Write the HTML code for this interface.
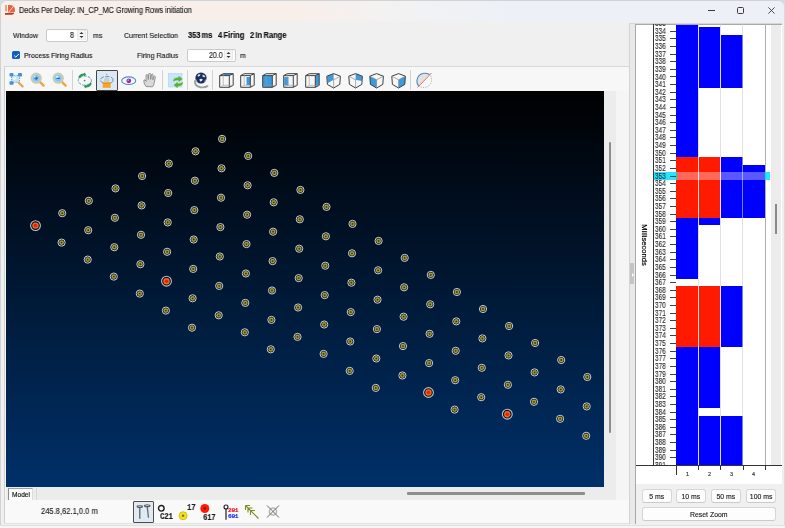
<!DOCTYPE html>
<html><head><meta charset="utf-8"><style>
*{margin:0;padding:0;box-sizing:border-box}
html,body{width:785px;height:528px;overflow:hidden;background:#d3dde6;font-family:"Liberation Sans",sans-serif;color:#1a1a1a}
.a{position:absolute}
.t{position:absolute;white-space:nowrap;font-size:7.1px;line-height:9px;will-change:transform;-webkit-text-stroke:0.15px currentColor}
.lab{position:absolute;left:655px;font-size:8.2px;line-height:9px;color:#262626;transform:scaleX(0.8);transform-origin:0 0;letter-spacing:-0.1px;will-change:transform;-webkit-text-stroke:0.12px #262626}
.tick{position:absolute;left:669.6px;width:6.2px;height:1px;background:#404040}
.btn{position:absolute;background:#fdfdfd;border:1px solid #d6d6d6;border-bottom-color:#cacaca;border-radius:3px;font-size:8px;line-height:14px;text-align:center;color:#1a1a1a;will-change:transform}
.btn span{display:inline-block;transform:scaleX(0.86);-webkit-text-stroke:0.15px currentColor}
</style></head><body>
<!-- window frame -->
<div class="a" style="left:0;top:0;width:785px;height:528px;background:#f0f0f0;border:1px solid #cfd3d8;border-bottom-color:#e4e4e4;border-right-color:#dadada;border-radius:7px 7px 0 0"></div>
<!-- title bar -->
<div class="a" style="left:1px;top:1px;width:783px;height:19.5px;border-radius:6px 6px 0 0;background:linear-gradient(90deg,#f8efeb 0%,#f8efeb 38%,#f2f2f3 52%,#edf1f7 64%,#edf1f7 100%)"></div>
<svg class="a" style="left:5px;top:5px" width="11" height="11" viewBox="0 0 11 11"><rect x="0" y="0" width="2" height="6.4" fill="#eba492"/><path d="M3 0H5Q10 0.2 10 5.2Q10 7.5 8.3 7.5H3Z" fill="#e8643e"/><path d="M3.6 7.2L8.6 1.2" stroke="#fbe3da" stroke-width="0.9"/><path d="M0 8H9.2Q8.8 9.8 6.8 9.8H0Z" fill="#a8402e"/></svg>
<div class="t" style="left:18.5px;top:6px;font-size:8.2px;color:#1b1b1b;transform:scaleX(0.887);transform-origin:0 0">Decks Per Delay: IN_CP_MC Growing Rows initiation</div>
<!-- window controls -->
<div class="a" style="left:708px;top:10px;width:7px;height:1px;background:#3a3a3a"></div>
<div class="a" style="left:737.3px;top:7.3px;width:7px;height:6.5px;border:1px solid #3a3a3a;border-radius:1.5px"></div>
<svg class="a" style="left:767.5px;top:7px" width="7" height="7" viewBox="0 0 7 7"><path d="M0.4 0.4L6.6 6.6M6.6 0.4L0.4 6.6" stroke="#3a3a3a" stroke-width="0.9"/></svg>

<!-- controls -->
<div class="t" style="left:13px;top:31px;font-size:8px;transform:scaleX(0.875);transform-origin:0 0;color:#1c1c1c">Window</div>
<div class="a" style="left:46px;top:28.5px;width:42px;height:13px;background:#fff;border:1px solid #c9c9c9;border-radius:2px"></div>
<div class="t" style="left:70.3px;top:31px;font-size:8.4px;transform:scaleX(0.85);transform-origin:0 0">8</div>
<svg class="a" style="left:77px;top:30px" width="9" height="10" viewBox="0 0 9 10"><rect x="0.5" y="0" width="8" height="10" fill="#f4f4f4" stroke="#dcdcdc" stroke-width="0.5"/><path d="M2.5 4L4.5 2L6.5 4Z M2.5 6L4.5 8L6.5 6Z" fill="#333"/></svg>
<div class="t" style="left:92.7px;top:31px;font-size:8px;transform:scaleX(0.875);transform-origin:0 0;color:#1c1c1c">ms</div>
<div class="t" style="left:123.8px;top:31px;font-size:8px;transform:scaleX(0.875);transform-origin:0 0;color:#1c1c1c">Current Selection</div>
<div class="t" style="left:188.3px;top:31.2px;font-size:8.2px;font-weight:bold;color:#111;transform:scaleX(0.915);transform-origin:0 0;word-spacing:-1.2px">353 ms</div><div class="t" style="left:217.8px;top:31.2px;font-size:8.2px;font-weight:bold;color:#111;transform:scaleX(0.915);transform-origin:0 0;word-spacing:-0.8px">4 Firing</div><div class="t" style="left:249.6px;top:31.2px;font-size:8.2px;font-weight:bold;color:#111;transform:scaleX(0.915);transform-origin:0 0;word-spacing:-0.8px">2 In Range</div>

<div class="a" style="left:11.5px;top:50.5px;width:8.5px;height:8.5px;background:#1160c0;border-radius:1.5px"></div>
<svg class="a" style="left:11.5px;top:50.5px" width="9" height="9" viewBox="0 0 9 9"><path d="M2.2 4.6L3.8 6.2L6.9 2.9" stroke="#fff" stroke-width="1" fill="none"/></svg>
<div class="t" style="left:23.9px;top:50.8px;font-size:8px;transform:scaleX(0.875);transform-origin:0 0;color:#141414">Process Firing Radius</div>
<div class="t" style="left:137.1px;top:50.8px;font-size:8px;transform:scaleX(0.875);transform-origin:0 0;color:#1c1c1c">Firing Radius</div>
<div class="a" style="left:187px;top:48.5px;width:48.5px;height:13px;background:#fff;border:1px solid #c9c9c9;border-radius:2px"></div>
<div class="t" style="left:208.5px;top:50.8px;font-size:8.2px;transform:scaleX(0.85);transform-origin:0 0">20.0</div>
<svg class="a" style="left:224px;top:50px" width="9" height="10" viewBox="0 0 9 10"><rect x="0.5" y="0" width="8" height="10" fill="#f4f4f4" stroke="#dcdcdc" stroke-width="0.5"/><path d="M2.5 4L4.5 2L6.5 4Z M2.5 6L4.5 8L6.5 6Z" fill="#333"/></svg>
<div class="t" style="left:240px;top:50.8px;font-size:8px;transform:scaleX(0.875);transform-origin:0 0;color:#1c1c1c">m</div>

<!-- left panel -->
<div class="a" style="left:3.5px;top:66px;width:625px;height:458px;background:#f5f5f5;border-top:1px solid #d8d8d8;border-left:1px solid #d0d0d0"></div>
<!-- toolbar -->
<div class="a" style="left:4.5px;top:67px;width:623.5px;height:24px;background:#f7f7f7"></div><div class="a" style="left:71.6px;top:70px;width:1px;height:20px;background:#d2d2d2"></div><div class="a" style="left:162.0px;top:70px;width:1px;height:20px;background:#d2d2d2"></div><div class="a" style="left:186.9px;top:70px;width:1px;height:20px;background:#d2d2d2"></div><div class="a" style="left:212.1px;top:70px;width:1px;height:20px;background:#d2d2d2"></div><div class="a" style="left:410.1px;top:70px;width:1px;height:20px;background:#d2d2d2"></div><div class="a" style="left:95.8px;top:70px;width:21.8px;height:20.8px;background:#dce8f4;border:1px solid #454545;border-radius:1px"></div><svg class="a" style="left:8px;top:72px" width="17" height="17" viewBox="0 0 17 17"><path d="M3.5 3.5H11.5V10.5H3.5Z" fill="none" stroke="#6aa8de" stroke-width="1" stroke-dasharray="1.5 1"/><circle cx="7.5" cy="7" r="3.6" fill="#bfe3fa"/><circle cx="6.8" cy="6.3" r="1.6" fill="#e6f5fe"/><rect x="1.5" y="1" width="4" height="3.6" rx="0.8" fill="#4a8fd6"/><rect x="10" y="1" width="4" height="3.6" rx="0.8" fill="#4a8fd6"/><rect x="1.5" y="9.2" width="4" height="3.6" rx="0.8" fill="#4a8fd6"/><path d="M10.5 10.5L14.6 14.4" stroke="#e5a64c" stroke-width="2.2" stroke-linecap="round"/></svg><svg class="a" style="left:30.4px;top:72px" width="16" height="16" viewBox="0 0 16 16"><path d="M9.2 9.2L13.6 13.6" stroke="#e8a748" stroke-width="2.4" stroke-linecap="round"/><circle cx="6.2" cy="6.2" r="4.9" fill="#a8d6f4" stroke="#d4c7a6" stroke-width="1.5"/><circle cx="6.2" cy="6.2" r="3.3" fill="#86c4f0"/><circle cx="5.2" cy="5.0" r="1.3" fill="#d6eefc"/><path d="M4.4 6.2h3.6M6.2 4.4v3.6" stroke="#2b6fb8" stroke-width="1.2"/></svg><svg class="a" style="left:52.0px;top:72px" width="16" height="16" viewBox="0 0 16 16"><path d="M9.2 9.2L13.6 13.6" stroke="#e8a748" stroke-width="2.4" stroke-linecap="round"/><circle cx="6.2" cy="6.2" r="4.9" fill="#a8d6f4" stroke="#d4c7a6" stroke-width="1.5"/><circle cx="6.2" cy="6.2" r="3.3" fill="#86c4f0"/><circle cx="5.2" cy="5.0" r="1.3" fill="#d6eefc"/><path d="M4.4 6.4h3.6" stroke="#2b6fb8" stroke-width="1.2"/></svg><svg class="a" style="left:77px;top:72px" width="17" height="17" viewBox="0 0 17 17"><ellipse cx="7.8" cy="8.6" rx="6.6" ry="4.6" fill="none" stroke="#5b95c5" stroke-width="1" stroke-dasharray="3 1.2"/><path d="M1.2 5.5Q2.5 1.5 7 1.5L7.2 0.4L9.2 2.6L7 4.6L7 3.5Q4 3.6 3 6.2Z" fill="#2c9a55"/><path d="M14.8 11.5Q13.5 15.5 9 15.5L8.8 16.6L6.8 14.4L9 12.4L9 13.5Q12 13.4 13 10.8Z" fill="#2c9a55"/><circle cx="7.6" cy="8.6" r="0.9" fill="#3aa060"/></svg><svg class="a" style="left:99px;top:72px" width="16" height="17" viewBox="0 0 16 17"><path d="M4.8 10.6Q4.6 5.5 7.7 4.6Q10.8 5.5 10.6 10.6Z" fill="#cdcdcd"/><ellipse cx="7.8" cy="8" rx="6.4" ry="3.6" fill="none" stroke="#4a8cc4" stroke-width="0.9" stroke-dasharray="4 1.5"/><circle cx="7.7" cy="2.4" r="0.7" fill="#999"/><rect x="3.7" y="10.6" width="8" height="5.2" fill="#f5a623"/><rect x="3.7" y="10.6" width="8" height="1.2" fill="#e58e10"/></svg><svg class="a" style="left:120.5px;top:74px" width="16" height="14" viewBox="0 0 16 14"><ellipse cx="7.7" cy="6.7" rx="7" ry="3.8" fill="none" stroke="#4b8ec9" stroke-width="1.1"/><circle cx="7.8" cy="6.8" r="2.4" fill="#8e2bb0"/><circle cx="7.2" cy="6.2" r="0.9" fill="#d57fe8"/></svg><svg class="a" style="left:143px;top:73px" width="14" height="15" viewBox="0 0 14 15"><path d="M3 13.5Q1 11 0.8 8Q0.8 6.6 2 6.9L3.2 8.4L3 2.6Q3 1.6 4 1.6Q4.8 1.6 5 2.6L5.3 6.5L5.6 1.2Q5.8 0.3 6.7 0.4Q7.6 0.5 7.6 1.4L7.7 6.4L8.4 1.8Q8.6 1 9.4 1.1Q10.2 1.3 10.1 2.2L9.8 6.8L10.8 3.6Q11.1 2.9 11.8 3.1Q12.5 3.4 12.3 4.2L11.4 9Q11 12 9.6 13.8Z" fill="#d9d9d9" stroke="#8a8a8a" stroke-width="0.9"/></svg><svg class="a" style="left:167.5px;top:72.5px" width="16" height="16" viewBox="0 0 16 16"><rect x="0.5" y="0.5" width="13.5" height="13.5" fill="#c6e3f8" stroke="#aed3f0" stroke-width="0.6"/><path d="M2 2.5h11M2 5h11M2 7.5h11M2 10h11M2 12.5h11" stroke="#eaf5fd" stroke-width="0.6" stroke-dasharray="0.8 1.6"/><path d="M5 8.6Q5.4 4.2 10.6 4.4L10.6 2.8L14.6 5.9L10.6 9L10.6 7.3Q7.5 7.2 5 8.6Z" fill="#5bb232"/><path d="M15.2 9Q14.8 13.4 9.6 13.4L9.6 15.2L5.6 12L9.6 8.9L9.6 10.6Q12.7 10.6 15.2 9Z" fill="#5bb232"/></svg><svg class="a" style="left:192.5px;top:71.5px" width="16" height="18" viewBox="0 0 16 18"><path d="M2 9Q1.6 14 7.5 15.2Q11.5 15.8 14.5 14.2" stroke="#a0a0a0" stroke-width="1.9" fill="none" stroke-linecap="round"/><circle cx="8" cy="6" r="5.6" fill="#1b2d5c"/><path d="M4.5 3.2Q6 1.6 7.6 2.4Q7 4.4 5 4.8Z" fill="#dfe8f4"/><path d="M9.6 2.6Q11.8 3 12.4 5Q10.8 5.6 9.4 4.4Z" fill="#c9d8ec"/><path d="M6.4 7.2Q8.4 6.2 9.8 7.6Q9 9.8 7 9.6Z" fill="#e3ecf6"/><path d="M3 7Q3.6 8.8 4.6 9.4L3.6 9.8Q2.6 8.6 2.6 7.2Z" fill="#9fb4d4"/><path d="M11.8 8.2Q12.6 7.4 13.2 7.2Q12.8 9.6 11.2 10.4Z" fill="#9fb4d4"/></svg><svg class="a" style="left:218.5px;top:73px" width="15" height="15" viewBox="0 0 15 15"><path d="M0.7 2.6L4.2 0.7H14.2L10.3 2.6Z" fill="#3a9be0"/><path d="M0.7 2.6H10.3V14.3H0.7Z M4.2 0.7H14.2V12.3 M10.3 2.6L14.2 0.7 M10.3 14.3L14.2 12.3 M0.7 2.6L4.2 0.7" fill="none" stroke="#404040" stroke-width="1"/><path d="M4.2 0.7V12.3H14.2 M0.7 14.3L4.2 12.3" fill="none" stroke="#9a9a9a" stroke-width="0.6"/></svg><svg class="a" style="left:240px;top:73px" width="15" height="15" viewBox="0 0 15 15"><path d="M6.5 4H10.3V12H6.5Z" fill="#3a9be0"/><path d="M0.7 2.6H10.3V14.3H0.7Z M4.2 0.7H14.2V12.3 M10.3 2.6L14.2 0.7 M10.3 14.3L14.2 12.3 M0.7 2.6L4.2 0.7" fill="none" stroke="#404040" stroke-width="1"/><path d="M4.2 0.7V12.3H14.2 M0.7 14.3L4.2 12.3" fill="none" stroke="#9a9a9a" stroke-width="0.6"/></svg><svg class="a" style="left:261.8px;top:73px" width="15" height="15" viewBox="0 0 15 15"><path d="M0.7 2.6H10.3V14.3H0.7Z" fill="#3a9be0"/><path d="M0.7 2.6H10.3V14.3H0.7Z M4.2 0.7H14.2V12.3 M10.3 2.6L14.2 0.7 M10.3 14.3L14.2 12.3 M0.7 2.6L4.2 0.7" fill="none" stroke="#404040" stroke-width="1"/><path d="M4.2 0.7V12.3H14.2 M0.7 14.3L4.2 12.3" fill="none" stroke="#9a9a9a" stroke-width="0.6"/></svg><svg class="a" style="left:283.3px;top:73px" width="15" height="15" viewBox="0 0 15 15"><path d="M1.3 4H5.5V12.5H1.3Z" fill="#3a9be0"/><path d="M0.7 2.6H10.3V14.3H0.7Z M4.2 0.7H14.2V12.3 M10.3 2.6L14.2 0.7 M10.3 14.3L14.2 12.3 M0.7 2.6L4.2 0.7" fill="none" stroke="#404040" stroke-width="1"/><path d="M4.2 0.7V12.3H14.2 M0.7 14.3L4.2 12.3" fill="none" stroke="#9a9a9a" stroke-width="0.6"/></svg><svg class="a" style="left:304.8px;top:73px" width="15" height="15" viewBox="0 0 15 15"><path d="M10.3 2.6L14.2 0.7V12.3L10.3 14.3Z" fill="#3a9be0"/><path d="M0.7 2.6H10.3V14.3H0.7Z M4.2 0.7H14.2V12.3 M10.3 2.6L14.2 0.7 M10.3 14.3L14.2 12.3 M0.7 2.6L4.2 0.7" fill="none" stroke="#404040" stroke-width="1"/><path d="M4.2 0.7V12.3H14.2 M0.7 14.3L4.2 12.3" fill="none" stroke="#9a9a9a" stroke-width="0.6"/></svg><svg class="a" style="left:326.3px;top:72.8px" width="15" height="16" viewBox="0 0 15 16"><path d="M0.8 3.2L7.6 0.6L7.6 6.8L2 10Z" fill="#3a9be0"/><path d="M0.8 3.2L7.6 0.6L14.4 3.2L13.8 11.4L7.6 15L1.4 11.4Z" fill="none" stroke="#404040" stroke-width="1"/><path d="M0.8 3.2L7.6 6.8L14.4 3.2 M7.6 6.8V15" fill="none" stroke="#8a8a8a" stroke-width="0.7"/></svg><svg class="a" style="left:347.8px;top:72.8px" width="15" height="16" viewBox="0 0 15 16"><path d="M7.6 0.6L14.4 3.2L13.6 8L7.6 6.8Z" fill="#3a9be0"/><path d="M0.8 3.2L7.6 0.6L14.4 3.2L13.8 11.4L7.6 15L1.4 11.4Z" fill="none" stroke="#404040" stroke-width="1"/><path d="M0.8 3.2L7.6 6.8L14.4 3.2 M7.6 6.8V15" fill="none" stroke="#8a8a8a" stroke-width="0.7"/></svg><svg class="a" style="left:369.4px;top:72.8px" width="15" height="16" viewBox="0 0 15 16"><path d="M0.8 3.2L7.6 6.8V15L1.4 11.4Z" fill="#3a9be0"/><path d="M0.8 3.2L7.6 0.6L14.4 3.2L13.8 11.4L7.6 15L1.4 11.4Z" fill="none" stroke="#404040" stroke-width="1"/><path d="M0.8 3.2L7.6 6.8L14.4 3.2 M7.6 6.8V15" fill="none" stroke="#8a8a8a" stroke-width="0.7"/></svg><svg class="a" style="left:390.9px;top:72.8px" width="15" height="16" viewBox="0 0 15 16"><path d="M14.4 3.2L7.6 6.8V15L13.8 11.4Z" fill="#3a9be0"/><path d="M0.8 3.2L7.6 0.6L14.4 3.2L13.8 11.4L7.6 15L1.4 11.4Z" fill="none" stroke="#404040" stroke-width="1"/><path d="M0.8 3.2L7.6 6.8L14.4 3.2 M7.6 6.8V15" fill="none" stroke="#8a8a8a" stroke-width="0.7"/></svg><svg class="a" style="left:415.5px;top:71.5px" width="17" height="17" viewBox="0 0 17 17"><path d="M2.5 14Q0.5 11 1 8Q2 2 8 1.2Q11 1 13.5 2.5Z" fill="#e2e2e2"/><path d="M2.5 14Q0.5 11 1 8Q2 2 8 1.2Q11 1 13.5 2.5" fill="none" stroke="#4f86c0" stroke-width="1.1"/><path d="M13.5 2.5Q16 5 15.5 9Q14.5 15 8 15.5Q5 15.5 2.5 14" fill="none" stroke="#9a9a9a" stroke-width="0.9" stroke-dasharray="1 1.2"/><path d="M1.5 15.5L15.5 1" stroke="#e07060" stroke-width="1"/></svg>
<!-- view -->
<div class="a" style="left:6px;top:91px;width:598px;height:396px;background:linear-gradient(180deg,#000000 0%,#003069 100%)"></div>
<svg class="a" style="left:6px;top:91px" width="598" height="396" viewBox="0 0 598 396"><circle cx="29.5" cy="134.6" r="4.9" fill="#0a0f18" stroke="#b9c3cc" stroke-width="1.1"/><circle cx="29.5" cy="134.6" r="3.2" fill="#f26a1e"/><circle cx="29.5" cy="134.6" r="1.8" fill="#e8200c"/><circle cx="56.2" cy="122.2" r="3.6" fill="#15170f" stroke="#c9cfcf" stroke-width="1"/><circle cx="56.2" cy="122.2" r="2.4" fill="#9d9b44"/><circle cx="56.2" cy="122.2" r="0.9" fill="#34341e"/><circle cx="55.6" cy="151.6" r="3.6" fill="#15170f" stroke="#c9cfcf" stroke-width="1"/><circle cx="55.6" cy="151.6" r="2.4" fill="#9d9b44"/><circle cx="55.6" cy="151.6" r="0.9" fill="#34341e"/><circle cx="82.8" cy="109.8" r="3.6" fill="#15170f" stroke="#c9cfcf" stroke-width="1"/><circle cx="82.8" cy="109.8" r="2.4" fill="#9d9b44"/><circle cx="82.8" cy="109.8" r="0.9" fill="#34341e"/><circle cx="82.2" cy="139.2" r="3.6" fill="#15170f" stroke="#c9cfcf" stroke-width="1"/><circle cx="82.2" cy="139.2" r="2.4" fill="#9d9b44"/><circle cx="82.2" cy="139.2" r="0.9" fill="#34341e"/><circle cx="81.7" cy="168.6" r="3.6" fill="#15170f" stroke="#c9cfcf" stroke-width="1"/><circle cx="81.7" cy="168.6" r="2.4" fill="#9d9b44"/><circle cx="81.7" cy="168.6" r="0.9" fill="#34341e"/><circle cx="109.5" cy="97.4" r="3.6" fill="#15170f" stroke="#c9cfcf" stroke-width="1"/><circle cx="109.5" cy="97.4" r="2.4" fill="#9d9b44"/><circle cx="109.5" cy="97.4" r="0.9" fill="#34341e"/><circle cx="108.9" cy="126.8" r="3.6" fill="#15170f" stroke="#c9cfcf" stroke-width="1"/><circle cx="108.9" cy="126.8" r="2.4" fill="#9d9b44"/><circle cx="108.9" cy="126.8" r="0.9" fill="#34341e"/><circle cx="108.3" cy="156.2" r="3.6" fill="#15170f" stroke="#c9cfcf" stroke-width="1"/><circle cx="108.3" cy="156.2" r="2.4" fill="#9d9b44"/><circle cx="108.3" cy="156.2" r="0.9" fill="#34341e"/><circle cx="107.8" cy="185.6" r="3.6" fill="#15170f" stroke="#c9cfcf" stroke-width="1"/><circle cx="107.8" cy="185.6" r="2.4" fill="#9d9b44"/><circle cx="107.8" cy="185.6" r="0.9" fill="#34341e"/><circle cx="136.1" cy="85.0" r="3.6" fill="#15170f" stroke="#c9cfcf" stroke-width="1"/><circle cx="136.1" cy="85.0" r="2.4" fill="#9d9b44"/><circle cx="136.1" cy="85.0" r="0.9" fill="#34341e"/><circle cx="135.6" cy="114.4" r="3.6" fill="#15170f" stroke="#c9cfcf" stroke-width="1"/><circle cx="135.6" cy="114.4" r="2.4" fill="#9d9b44"/><circle cx="135.6" cy="114.4" r="0.9" fill="#34341e"/><circle cx="135.0" cy="143.8" r="3.6" fill="#15170f" stroke="#c9cfcf" stroke-width="1"/><circle cx="135.0" cy="143.8" r="2.4" fill="#9d9b44"/><circle cx="135.0" cy="143.8" r="0.9" fill="#34341e"/><circle cx="134.4" cy="173.2" r="3.6" fill="#15170f" stroke="#c9cfcf" stroke-width="1"/><circle cx="134.4" cy="173.2" r="2.4" fill="#9d9b44"/><circle cx="134.4" cy="173.2" r="0.9" fill="#34341e"/><circle cx="133.8" cy="202.6" r="3.6" fill="#15170f" stroke="#c9cfcf" stroke-width="1"/><circle cx="133.8" cy="202.6" r="2.4" fill="#9d9b44"/><circle cx="133.8" cy="202.6" r="0.9" fill="#34341e"/><circle cx="162.8" cy="72.6" r="3.6" fill="#15170f" stroke="#c9cfcf" stroke-width="1"/><circle cx="162.8" cy="72.6" r="2.4" fill="#9d9b44"/><circle cx="162.8" cy="72.6" r="0.9" fill="#34341e"/><circle cx="162.2" cy="102.0" r="3.6" fill="#15170f" stroke="#c9cfcf" stroke-width="1"/><circle cx="162.2" cy="102.0" r="2.4" fill="#9d9b44"/><circle cx="162.2" cy="102.0" r="0.9" fill="#34341e"/><circle cx="161.7" cy="131.4" r="3.6" fill="#15170f" stroke="#c9cfcf" stroke-width="1"/><circle cx="161.7" cy="131.4" r="2.4" fill="#9d9b44"/><circle cx="161.7" cy="131.4" r="0.9" fill="#34341e"/><circle cx="161.1" cy="160.8" r="3.6" fill="#15170f" stroke="#c9cfcf" stroke-width="1"/><circle cx="161.1" cy="160.8" r="2.4" fill="#9d9b44"/><circle cx="161.1" cy="160.8" r="0.9" fill="#34341e"/><circle cx="160.5" cy="190.2" r="4.9" fill="#0a0f18" stroke="#b9c3cc" stroke-width="1.1"/><circle cx="160.5" cy="190.2" r="3.2" fill="#f26a1e"/><circle cx="160.5" cy="190.2" r="1.8" fill="#e8200c"/><circle cx="159.9" cy="219.6" r="3.6" fill="#15170f" stroke="#c9cfcf" stroke-width="1"/><circle cx="159.9" cy="219.6" r="2.4" fill="#9d9b44"/><circle cx="159.9" cy="219.6" r="0.9" fill="#34341e"/><circle cx="189.5" cy="60.3" r="3.6" fill="#15170f" stroke="#c9cfcf" stroke-width="1"/><circle cx="189.5" cy="60.3" r="2.4" fill="#9d9b44"/><circle cx="189.5" cy="60.3" r="0.9" fill="#34341e"/><circle cx="188.9" cy="89.7" r="3.6" fill="#15170f" stroke="#c9cfcf" stroke-width="1"/><circle cx="188.9" cy="89.7" r="2.4" fill="#9d9b44"/><circle cx="188.9" cy="89.7" r="0.9" fill="#34341e"/><circle cx="188.3" cy="119.1" r="3.6" fill="#15170f" stroke="#c9cfcf" stroke-width="1"/><circle cx="188.3" cy="119.1" r="2.4" fill="#9d9b44"/><circle cx="188.3" cy="119.1" r="0.9" fill="#34341e"/><circle cx="187.7" cy="148.5" r="3.6" fill="#15170f" stroke="#c9cfcf" stroke-width="1"/><circle cx="187.7" cy="148.5" r="2.4" fill="#9d9b44"/><circle cx="187.7" cy="148.5" r="0.9" fill="#34341e"/><circle cx="187.2" cy="177.9" r="3.6" fill="#15170f" stroke="#c9cfcf" stroke-width="1"/><circle cx="187.2" cy="177.9" r="2.4" fill="#9d9b44"/><circle cx="187.2" cy="177.9" r="0.9" fill="#34341e"/><circle cx="186.6" cy="207.3" r="3.6" fill="#15170f" stroke="#c9cfcf" stroke-width="1"/><circle cx="186.6" cy="207.3" r="2.4" fill="#9d9b44"/><circle cx="186.6" cy="207.3" r="0.9" fill="#34341e"/><circle cx="186.0" cy="236.7" r="3.6" fill="#15170f" stroke="#c9cfcf" stroke-width="1"/><circle cx="186.0" cy="236.7" r="2.4" fill="#9d9b44"/><circle cx="186.0" cy="236.7" r="0.9" fill="#34341e"/><circle cx="216.1" cy="47.9" r="3.6" fill="#15170f" stroke="#c9cfcf" stroke-width="1"/><circle cx="216.1" cy="47.9" r="2.4" fill="#9d9b44"/><circle cx="216.1" cy="47.9" r="0.9" fill="#34341e"/><circle cx="215.5" cy="77.3" r="3.6" fill="#15170f" stroke="#c9cfcf" stroke-width="1"/><circle cx="215.5" cy="77.3" r="2.4" fill="#9d9b44"/><circle cx="215.5" cy="77.3" r="0.9" fill="#34341e"/><circle cx="215.0" cy="106.7" r="3.6" fill="#15170f" stroke="#c9cfcf" stroke-width="1"/><circle cx="215.0" cy="106.7" r="2.4" fill="#9d9b44"/><circle cx="215.0" cy="106.7" r="0.9" fill="#34341e"/><circle cx="214.4" cy="136.1" r="3.6" fill="#15170f" stroke="#c9cfcf" stroke-width="1"/><circle cx="214.4" cy="136.1" r="2.4" fill="#9d9b44"/><circle cx="214.4" cy="136.1" r="0.9" fill="#34341e"/><circle cx="213.8" cy="165.5" r="3.6" fill="#15170f" stroke="#c9cfcf" stroke-width="1"/><circle cx="213.8" cy="165.5" r="2.4" fill="#9d9b44"/><circle cx="213.8" cy="165.5" r="0.9" fill="#34341e"/><circle cx="213.2" cy="194.9" r="3.6" fill="#15170f" stroke="#c9cfcf" stroke-width="1"/><circle cx="213.2" cy="194.9" r="2.4" fill="#9d9b44"/><circle cx="213.2" cy="194.9" r="0.9" fill="#34341e"/><circle cx="212.7" cy="224.3" r="3.6" fill="#15170f" stroke="#c9cfcf" stroke-width="1"/><circle cx="212.7" cy="224.3" r="2.4" fill="#9d9b44"/><circle cx="212.7" cy="224.3" r="0.9" fill="#34341e"/><circle cx="242.2" cy="64.9" r="3.6" fill="#15170f" stroke="#c9cfcf" stroke-width="1"/><circle cx="242.2" cy="64.9" r="2.4" fill="#9d9b44"/><circle cx="242.2" cy="64.9" r="0.9" fill="#34341e"/><circle cx="241.6" cy="94.3" r="3.6" fill="#15170f" stroke="#c9cfcf" stroke-width="1"/><circle cx="241.6" cy="94.3" r="2.4" fill="#9d9b44"/><circle cx="241.6" cy="94.3" r="0.9" fill="#34341e"/><circle cx="241.1" cy="123.7" r="3.6" fill="#15170f" stroke="#c9cfcf" stroke-width="1"/><circle cx="241.1" cy="123.7" r="2.4" fill="#9d9b44"/><circle cx="241.1" cy="123.7" r="0.9" fill="#34341e"/><circle cx="240.5" cy="153.1" r="3.6" fill="#15170f" stroke="#c9cfcf" stroke-width="1"/><circle cx="240.5" cy="153.1" r="2.4" fill="#9d9b44"/><circle cx="240.5" cy="153.1" r="0.9" fill="#34341e"/><circle cx="239.9" cy="182.5" r="3.6" fill="#15170f" stroke="#c9cfcf" stroke-width="1"/><circle cx="239.9" cy="182.5" r="2.4" fill="#9d9b44"/><circle cx="239.9" cy="182.5" r="0.9" fill="#34341e"/><circle cx="239.3" cy="211.9" r="3.6" fill="#15170f" stroke="#c9cfcf" stroke-width="1"/><circle cx="239.3" cy="211.9" r="2.4" fill="#9d9b44"/><circle cx="239.3" cy="211.9" r="0.9" fill="#34341e"/><circle cx="238.8" cy="241.3" r="3.6" fill="#15170f" stroke="#c9cfcf" stroke-width="1"/><circle cx="238.8" cy="241.3" r="2.4" fill="#9d9b44"/><circle cx="238.8" cy="241.3" r="0.9" fill="#34341e"/><circle cx="268.3" cy="81.9" r="3.6" fill="#15170f" stroke="#c9cfcf" stroke-width="1"/><circle cx="268.3" cy="81.9" r="2.4" fill="#9d9b44"/><circle cx="268.3" cy="81.9" r="0.9" fill="#34341e"/><circle cx="267.7" cy="111.3" r="3.6" fill="#15170f" stroke="#c9cfcf" stroke-width="1"/><circle cx="267.7" cy="111.3" r="2.4" fill="#9d9b44"/><circle cx="267.7" cy="111.3" r="0.9" fill="#34341e"/><circle cx="267.1" cy="140.7" r="3.6" fill="#15170f" stroke="#c9cfcf" stroke-width="1"/><circle cx="267.1" cy="140.7" r="2.4" fill="#9d9b44"/><circle cx="267.1" cy="140.7" r="0.9" fill="#34341e"/><circle cx="266.6" cy="170.1" r="3.6" fill="#15170f" stroke="#c9cfcf" stroke-width="1"/><circle cx="266.6" cy="170.1" r="2.4" fill="#9d9b44"/><circle cx="266.6" cy="170.1" r="0.9" fill="#34341e"/><circle cx="266.0" cy="199.5" r="3.6" fill="#15170f" stroke="#c9cfcf" stroke-width="1"/><circle cx="266.0" cy="199.5" r="2.4" fill="#9d9b44"/><circle cx="266.0" cy="199.5" r="0.9" fill="#34341e"/><circle cx="265.4" cy="228.9" r="3.6" fill="#15170f" stroke="#c9cfcf" stroke-width="1"/><circle cx="265.4" cy="228.9" r="2.4" fill="#9d9b44"/><circle cx="265.4" cy="228.9" r="0.9" fill="#34341e"/><circle cx="264.8" cy="258.3" r="3.6" fill="#15170f" stroke="#c9cfcf" stroke-width="1"/><circle cx="264.8" cy="258.3" r="2.4" fill="#9d9b44"/><circle cx="264.8" cy="258.3" r="0.9" fill="#34341e"/><circle cx="294.4" cy="98.9" r="3.6" fill="#15170f" stroke="#c9cfcf" stroke-width="1"/><circle cx="294.4" cy="98.9" r="2.4" fill="#9d9b44"/><circle cx="294.4" cy="98.9" r="0.9" fill="#34341e"/><circle cx="293.8" cy="128.3" r="3.6" fill="#15170f" stroke="#c9cfcf" stroke-width="1"/><circle cx="293.8" cy="128.3" r="2.4" fill="#9d9b44"/><circle cx="293.8" cy="128.3" r="0.9" fill="#34341e"/><circle cx="293.2" cy="157.7" r="3.6" fill="#15170f" stroke="#c9cfcf" stroke-width="1"/><circle cx="293.2" cy="157.7" r="2.4" fill="#9d9b44"/><circle cx="293.2" cy="157.7" r="0.9" fill="#34341e"/><circle cx="292.7" cy="187.1" r="3.6" fill="#15170f" stroke="#c9cfcf" stroke-width="1"/><circle cx="292.7" cy="187.1" r="2.4" fill="#9d9b44"/><circle cx="292.7" cy="187.1" r="0.9" fill="#34341e"/><circle cx="292.1" cy="216.5" r="3.6" fill="#15170f" stroke="#c9cfcf" stroke-width="1"/><circle cx="292.1" cy="216.5" r="2.4" fill="#9d9b44"/><circle cx="292.1" cy="216.5" r="0.9" fill="#34341e"/><circle cx="291.5" cy="245.9" r="3.6" fill="#15170f" stroke="#c9cfcf" stroke-width="1"/><circle cx="291.5" cy="245.9" r="2.4" fill="#9d9b44"/><circle cx="291.5" cy="245.9" r="0.9" fill="#34341e"/><circle cx="320.5" cy="115.9" r="3.6" fill="#15170f" stroke="#c9cfcf" stroke-width="1"/><circle cx="320.5" cy="115.9" r="2.4" fill="#9d9b44"/><circle cx="320.5" cy="115.9" r="0.9" fill="#34341e"/><circle cx="319.9" cy="145.3" r="3.6" fill="#15170f" stroke="#c9cfcf" stroke-width="1"/><circle cx="319.9" cy="145.3" r="2.4" fill="#9d9b44"/><circle cx="319.9" cy="145.3" r="0.9" fill="#34341e"/><circle cx="319.3" cy="174.7" r="3.6" fill="#15170f" stroke="#c9cfcf" stroke-width="1"/><circle cx="319.3" cy="174.7" r="2.4" fill="#9d9b44"/><circle cx="319.3" cy="174.7" r="0.9" fill="#34341e"/><circle cx="318.7" cy="204.1" r="3.6" fill="#15170f" stroke="#c9cfcf" stroke-width="1"/><circle cx="318.7" cy="204.1" r="2.4" fill="#9d9b44"/><circle cx="318.7" cy="204.1" r="0.9" fill="#34341e"/><circle cx="318.2" cy="233.5" r="3.6" fill="#15170f" stroke="#c9cfcf" stroke-width="1"/><circle cx="318.2" cy="233.5" r="2.4" fill="#9d9b44"/><circle cx="318.2" cy="233.5" r="0.9" fill="#34341e"/><circle cx="317.6" cy="262.9" r="3.6" fill="#15170f" stroke="#c9cfcf" stroke-width="1"/><circle cx="317.6" cy="262.9" r="2.4" fill="#9d9b44"/><circle cx="317.6" cy="262.9" r="0.9" fill="#34341e"/><circle cx="346.5" cy="132.9" r="3.6" fill="#15170f" stroke="#c9cfcf" stroke-width="1"/><circle cx="346.5" cy="132.9" r="2.4" fill="#9d9b44"/><circle cx="346.5" cy="132.9" r="0.9" fill="#34341e"/><circle cx="346.0" cy="162.3" r="3.6" fill="#15170f" stroke="#c9cfcf" stroke-width="1"/><circle cx="346.0" cy="162.3" r="2.4" fill="#9d9b44"/><circle cx="346.0" cy="162.3" r="0.9" fill="#34341e"/><circle cx="345.4" cy="191.7" r="3.6" fill="#15170f" stroke="#c9cfcf" stroke-width="1"/><circle cx="345.4" cy="191.7" r="2.4" fill="#9d9b44"/><circle cx="345.4" cy="191.7" r="0.9" fill="#34341e"/><circle cx="344.8" cy="221.1" r="3.6" fill="#15170f" stroke="#c9cfcf" stroke-width="1"/><circle cx="344.8" cy="221.1" r="2.4" fill="#9d9b44"/><circle cx="344.8" cy="221.1" r="0.9" fill="#34341e"/><circle cx="344.2" cy="250.5" r="3.6" fill="#15170f" stroke="#c9cfcf" stroke-width="1"/><circle cx="344.2" cy="250.5" r="2.4" fill="#9d9b44"/><circle cx="344.2" cy="250.5" r="0.9" fill="#34341e"/><circle cx="343.7" cy="279.9" r="3.6" fill="#15170f" stroke="#c9cfcf" stroke-width="1"/><circle cx="343.7" cy="279.9" r="2.4" fill="#9d9b44"/><circle cx="343.7" cy="279.9" r="0.9" fill="#34341e"/><circle cx="372.6" cy="149.9" r="3.6" fill="#15170f" stroke="#c9cfcf" stroke-width="1"/><circle cx="372.6" cy="149.9" r="2.4" fill="#9d9b44"/><circle cx="372.6" cy="149.9" r="0.9" fill="#34341e"/><circle cx="372.1" cy="179.3" r="3.6" fill="#15170f" stroke="#c9cfcf" stroke-width="1"/><circle cx="372.1" cy="179.3" r="2.4" fill="#9d9b44"/><circle cx="372.1" cy="179.3" r="0.9" fill="#34341e"/><circle cx="371.5" cy="208.7" r="3.6" fill="#15170f" stroke="#c9cfcf" stroke-width="1"/><circle cx="371.5" cy="208.7" r="2.4" fill="#9d9b44"/><circle cx="371.5" cy="208.7" r="0.9" fill="#34341e"/><circle cx="370.9" cy="238.1" r="3.6" fill="#15170f" stroke="#c9cfcf" stroke-width="1"/><circle cx="370.9" cy="238.1" r="2.4" fill="#9d9b44"/><circle cx="370.9" cy="238.1" r="0.9" fill="#34341e"/><circle cx="370.3" cy="267.5" r="3.6" fill="#15170f" stroke="#c9cfcf" stroke-width="1"/><circle cx="370.3" cy="267.5" r="2.4" fill="#9d9b44"/><circle cx="370.3" cy="267.5" r="0.9" fill="#34341e"/><circle cx="369.8" cy="296.9" r="3.6" fill="#15170f" stroke="#c9cfcf" stroke-width="1"/><circle cx="369.8" cy="296.9" r="2.4" fill="#9d9b44"/><circle cx="369.8" cy="296.9" r="0.9" fill="#34341e"/><circle cx="398.7" cy="166.9" r="3.6" fill="#15170f" stroke="#c9cfcf" stroke-width="1"/><circle cx="398.7" cy="166.9" r="2.4" fill="#9d9b44"/><circle cx="398.7" cy="166.9" r="0.9" fill="#34341e"/><circle cx="398.1" cy="196.3" r="3.6" fill="#15170f" stroke="#c9cfcf" stroke-width="1"/><circle cx="398.1" cy="196.3" r="2.4" fill="#9d9b44"/><circle cx="398.1" cy="196.3" r="0.9" fill="#34341e"/><circle cx="397.6" cy="225.7" r="3.6" fill="#15170f" stroke="#c9cfcf" stroke-width="1"/><circle cx="397.6" cy="225.7" r="2.4" fill="#9d9b44"/><circle cx="397.6" cy="225.7" r="0.9" fill="#34341e"/><circle cx="397.0" cy="255.1" r="3.6" fill="#15170f" stroke="#c9cfcf" stroke-width="1"/><circle cx="397.0" cy="255.1" r="2.4" fill="#9d9b44"/><circle cx="397.0" cy="255.1" r="0.9" fill="#34341e"/><circle cx="396.4" cy="284.5" r="3.6" fill="#15170f" stroke="#c9cfcf" stroke-width="1"/><circle cx="396.4" cy="284.5" r="2.4" fill="#9d9b44"/><circle cx="396.4" cy="284.5" r="0.9" fill="#34341e"/><circle cx="424.8" cy="183.9" r="3.6" fill="#15170f" stroke="#c9cfcf" stroke-width="1"/><circle cx="424.8" cy="183.9" r="2.4" fill="#9d9b44"/><circle cx="424.8" cy="183.9" r="0.9" fill="#34341e"/><circle cx="424.2" cy="213.3" r="3.6" fill="#15170f" stroke="#c9cfcf" stroke-width="1"/><circle cx="424.2" cy="213.3" r="2.4" fill="#9d9b44"/><circle cx="424.2" cy="213.3" r="0.9" fill="#34341e"/><circle cx="423.6" cy="242.8" r="3.6" fill="#15170f" stroke="#c9cfcf" stroke-width="1"/><circle cx="423.6" cy="242.8" r="2.4" fill="#9d9b44"/><circle cx="423.6" cy="242.8" r="0.9" fill="#34341e"/><circle cx="423.1" cy="272.1" r="3.6" fill="#15170f" stroke="#c9cfcf" stroke-width="1"/><circle cx="423.1" cy="272.1" r="2.4" fill="#9d9b44"/><circle cx="423.1" cy="272.1" r="0.9" fill="#34341e"/><circle cx="422.5" cy="301.5" r="4.9" fill="#0a0f18" stroke="#b9c3cc" stroke-width="1.1"/><circle cx="422.5" cy="301.5" r="3.2" fill="#f26a1e"/><circle cx="422.5" cy="301.5" r="1.8" fill="#e8200c"/><circle cx="450.9" cy="201.0" r="3.6" fill="#15170f" stroke="#c9cfcf" stroke-width="1"/><circle cx="450.9" cy="201.0" r="2.4" fill="#9d9b44"/><circle cx="450.9" cy="201.0" r="0.9" fill="#34341e"/><circle cx="450.3" cy="230.4" r="3.6" fill="#15170f" stroke="#c9cfcf" stroke-width="1"/><circle cx="450.3" cy="230.4" r="2.4" fill="#9d9b44"/><circle cx="450.3" cy="230.4" r="0.9" fill="#34341e"/><circle cx="449.7" cy="259.8" r="3.6" fill="#15170f" stroke="#c9cfcf" stroke-width="1"/><circle cx="449.7" cy="259.8" r="2.4" fill="#9d9b44"/><circle cx="449.7" cy="259.8" r="0.9" fill="#34341e"/><circle cx="449.2" cy="289.2" r="3.6" fill="#15170f" stroke="#c9cfcf" stroke-width="1"/><circle cx="449.2" cy="289.2" r="2.4" fill="#9d9b44"/><circle cx="449.2" cy="289.2" r="0.9" fill="#34341e"/><circle cx="448.6" cy="318.6" r="3.6" fill="#15170f" stroke="#c9cfcf" stroke-width="1"/><circle cx="448.6" cy="318.6" r="2.4" fill="#9d9b44"/><circle cx="448.6" cy="318.6" r="0.9" fill="#34341e"/><circle cx="477.0" cy="218.0" r="3.6" fill="#15170f" stroke="#c9cfcf" stroke-width="1"/><circle cx="477.0" cy="218.0" r="2.4" fill="#9d9b44"/><circle cx="477.0" cy="218.0" r="0.9" fill="#34341e"/><circle cx="476.4" cy="247.4" r="3.6" fill="#15170f" stroke="#c9cfcf" stroke-width="1"/><circle cx="476.4" cy="247.4" r="2.4" fill="#9d9b44"/><circle cx="476.4" cy="247.4" r="0.9" fill="#34341e"/><circle cx="475.8" cy="276.8" r="3.6" fill="#15170f" stroke="#c9cfcf" stroke-width="1"/><circle cx="475.8" cy="276.8" r="2.4" fill="#9d9b44"/><circle cx="475.8" cy="276.8" r="0.9" fill="#34341e"/><circle cx="475.2" cy="306.2" r="3.6" fill="#15170f" stroke="#c9cfcf" stroke-width="1"/><circle cx="475.2" cy="306.2" r="2.4" fill="#9d9b44"/><circle cx="475.2" cy="306.2" r="0.9" fill="#34341e"/><circle cx="503.1" cy="235.0" r="3.6" fill="#15170f" stroke="#c9cfcf" stroke-width="1"/><circle cx="503.1" cy="235.0" r="2.4" fill="#9d9b44"/><circle cx="503.1" cy="235.0" r="0.9" fill="#34341e"/><circle cx="502.5" cy="264.4" r="3.6" fill="#15170f" stroke="#c9cfcf" stroke-width="1"/><circle cx="502.5" cy="264.4" r="2.4" fill="#9d9b44"/><circle cx="502.5" cy="264.4" r="0.9" fill="#34341e"/><circle cx="501.9" cy="293.8" r="3.6" fill="#15170f" stroke="#c9cfcf" stroke-width="1"/><circle cx="501.9" cy="293.8" r="2.4" fill="#9d9b44"/><circle cx="501.9" cy="293.8" r="0.9" fill="#34341e"/><circle cx="501.3" cy="323.2" r="4.9" fill="#0a0f18" stroke="#b9c3cc" stroke-width="1.1"/><circle cx="501.3" cy="323.2" r="3.2" fill="#f26a1e"/><circle cx="501.3" cy="323.2" r="1.8" fill="#e8200c"/><circle cx="529.1" cy="252.0" r="3.6" fill="#15170f" stroke="#c9cfcf" stroke-width="1"/><circle cx="529.1" cy="252.0" r="2.4" fill="#9d9b44"/><circle cx="529.1" cy="252.0" r="0.9" fill="#34341e"/><circle cx="528.6" cy="281.4" r="3.6" fill="#15170f" stroke="#c9cfcf" stroke-width="1"/><circle cx="528.6" cy="281.4" r="2.4" fill="#9d9b44"/><circle cx="528.6" cy="281.4" r="0.9" fill="#34341e"/><circle cx="528.0" cy="310.8" r="3.6" fill="#15170f" stroke="#c9cfcf" stroke-width="1"/><circle cx="528.0" cy="310.8" r="2.4" fill="#9d9b44"/><circle cx="528.0" cy="310.8" r="0.9" fill="#34341e"/><circle cx="555.2" cy="269.0" r="3.6" fill="#15170f" stroke="#c9cfcf" stroke-width="1"/><circle cx="555.2" cy="269.0" r="2.4" fill="#9d9b44"/><circle cx="555.2" cy="269.0" r="0.9" fill="#34341e"/><circle cx="554.7" cy="298.4" r="3.6" fill="#15170f" stroke="#c9cfcf" stroke-width="1"/><circle cx="554.7" cy="298.4" r="2.4" fill="#9d9b44"/><circle cx="554.7" cy="298.4" r="0.9" fill="#34341e"/><circle cx="554.1" cy="327.8" r="3.6" fill="#15170f" stroke="#c9cfcf" stroke-width="1"/><circle cx="554.1" cy="327.8" r="2.4" fill="#9d9b44"/><circle cx="554.1" cy="327.8" r="0.9" fill="#34341e"/><circle cx="581.3" cy="286.0" r="3.6" fill="#15170f" stroke="#c9cfcf" stroke-width="1"/><circle cx="581.3" cy="286.0" r="2.4" fill="#9d9b44"/><circle cx="581.3" cy="286.0" r="0.9" fill="#34341e"/><circle cx="580.7" cy="315.4" r="3.6" fill="#15170f" stroke="#c9cfcf" stroke-width="1"/><circle cx="580.7" cy="315.4" r="2.4" fill="#9d9b44"/><circle cx="580.7" cy="315.4" r="0.9" fill="#34341e"/><circle cx="580.2" cy="344.8" r="3.6" fill="#15170f" stroke="#c9cfcf" stroke-width="1"/><circle cx="580.2" cy="344.8" r="2.4" fill="#9d9b44"/><circle cx="580.2" cy="344.8" r="0.9" fill="#34341e"/></svg>
<!-- v scroll -->
<div class="a" style="left:604px;top:91px;width:12px;height:409px;background:#ececec"></div>
<div class="a" style="left:608.8px;top:142.3px;width:2.4px;height:91px;background:#8e8e8e;border-radius:1px;height:290.8px"></div>
<!-- h scroll / tabs -->
<div class="a" style="left:6px;top:487px;width:610px;height:13px;background:#ececec"></div>
<div class="a" style="left:407px;top:492px;width:178px;height:3px;background:#8e8e8e;border-radius:1px"></div>
<div class="a" style="left:8px;top:488px;width:25px;height:12px;background:#fbfbfb;border-top:1px solid #a0a0a0;border-left:1px solid #8c8c8c;border-right:1px solid #dcdcdc"></div>
<div class="t" style="left:12.4px;top:490px;font-size:6.6px;color:#111">Model</div>
<div class="a" style="left:36px;top:488px;width:1px;height:12px;background:#d8d8d8"></div>
<!-- status bar -->
<div class="a" style="left:4.5px;top:500px;width:624px;height:23px;background:#f9f9f9"></div>
<div class="a" style="left:3.5px;top:523px;width:625px;height:1px;background:#e2e2e2"></div><div class="a" style="left:0;top:524.5px;width:785px;height:1px;background:#e0e0e0"></div><div class="a" style="left:0;top:525.5px;width:785px;height:2.5px;background:#f6f6f6"></div>
<div class="t" style="left:41px;top:507px;font-size:8.8px;color:#1e1e1e;transform:scaleX(0.86);transform-origin:0 0">245.8,62.1,0.0 m</div>
<div class="a" style="left:132.6px;top:501.2px;width:21.5px;height:21.4px;background:#dfeaf5;border:1px solid #505050;border-radius:1px"></div><svg class="a" style="left:134px;top:503px" width="18" height="18" viewBox="0 0 18 18"><path d="M5.8 4.5V15.7" stroke="#6a6a6a" stroke-width="1.4"/><ellipse cx="5.8" cy="3.6" rx="3.2" ry="1.5" fill="#5e5e5e"/><ellipse cx="5.8" cy="3.2" rx="1.9" ry="0.7" fill="#b0b0b0"/><path d="M13.2 3.5L14.5 14.8" stroke="#6a6a6a" stroke-width="1.3"/><ellipse cx="13.2" cy="2.8" rx="3.3" ry="1.5" fill="#5e5e5e"/><ellipse cx="13.2" cy="2.4" rx="1.9" ry="0.7" fill="#b0b0b0"/></svg><svg class="a" style="left:156.5px;top:503.5px" width="10" height="9" viewBox="0 0 10 9"><circle cx="4.3" cy="4.3" r="2.8" fill="none" stroke="#1e1e1e" stroke-width="1.4"/></svg><div class="t" style="left:159.5px;top:511.5px;font-size:9.6px;line-height:9px;font-family:'Liberation Mono',monospace;font-weight:bold;letter-spacing:-0.5px;color:#1e1e1e;transform:scaleX(0.8);transform-origin:0 0">C21</div><svg class="a" style="left:177px;top:509.5px" width="12" height="12" viewBox="0 0 12 12"><circle cx="6.1" cy="5.7" r="4" fill="#f1e31e" stroke="#c9b800" stroke-width="0.8"/><circle cx="6.1" cy="5.7" r="1.3" fill="#8a7a00"/></svg><div class="t" style="left:186.5px;top:502.5px;font-size:9.6px;line-height:9px;font-family:'Liberation Mono',monospace;font-weight:bold;letter-spacing:-0.5px;color:#1e1e1e;transform:scaleX(0.8);transform-origin:0 0">17</div><svg class="a" style="left:199px;top:503px" width="12" height="11" viewBox="0 0 12 11"><circle cx="5.8" cy="5.5" r="4.5" fill="#ff1a00"/><circle cx="5.8" cy="5.5" r="1.2" fill="#8a0a00"/></svg><div class="t" style="left:202.8px;top:512.8px;font-size:9.4px;line-height:9px;font-family:'Liberation Mono',monospace;font-weight:bold;letter-spacing:-0.5px;color:#1e1e1e;transform:scaleX(0.8);transform-origin:0 0">617</div><svg class="a" style="left:222.5px;top:503.5px" width="6" height="17" viewBox="0 0 6 17"><circle cx="3" cy="3" r="2" fill="none" stroke="#1e1e1e" stroke-width="1.1"/><path d="M3 5V15.8" stroke="#1e1e1e" stroke-width="1.2"/></svg><div class="t" style="left:228px;top:507.8px;font-size:6.2px;line-height:6px;font-family:'Liberation Mono',monospace;font-weight:bold;letter-spacing:-0.3px;color:#e8102a">201</div><div class="t" style="left:228px;top:514px;font-size:6.2px;line-height:6px;font-family:'Liberation Mono',monospace;font-weight:bold;letter-spacing:-0.3px;color:#1a2ee8">601</div><svg class="a" style="left:243.5px;top:504px" width="16" height="16" viewBox="0 0 16 16"><path d="M1.5 1.5L14.5 14.5 M1.5 1.5H6 M1.5 1.5V6 M4 4H8.5 M4 4V8.5 M6.5 6.5H11 M6.5 6.5V11" stroke="#7e8a24" stroke-width="1.1" fill="none"/></svg><svg class="a" style="left:265.5px;top:505px" width="15" height="14" viewBox="0 0 15 14"><circle cx="7" cy="6.5" r="3.6" fill="none" stroke="#b5b5b5" stroke-width="1.5"/><path d="M1 0.5L13 12.5M13 0.5L1 12.5" stroke="#6a6a6a" stroke-width="1"/></svg>

<!-- splitter -->
<div class="a" style="left:628.5px;top:23px;width:7px;height:501px;background:#e9e9e9;border-left:1px solid #d4d4d4;border-right:1.5px solid #a8a8a8"></div>
<div class="a" style="left:630.3px;top:263.4px;width:3.7px;height:21px;background:#c4c4c4"></div>
<svg class="a" style="left:630.5px;top:272px" width="4" height="6" viewBox="0 0 4 6"><path d="M1 1L3 3L1 5Z" fill="#fff"/></svg>

<!-- right panel -->
<div class="a" style="left:628.5px;top:22.5px;width:153.5px;height:1px;background:#d6d6d6"></div>
<div class="a" style="left:636px;top:23.5px;width:146px;height:460px;background:#fff"></div>
<div class="a" style="left:636px;top:23.5px;width:146px;height:1.2px;background:#a9a9a9"></div>
<div class="a" style="left:771.4px;top:24.5px;width:10px;height:441px;background:#ececec"></div>
<div class="a" style="left:775.2px;top:203.5px;width:1.9px;height:30px;background:#8a8a8a"></div>
<div class="a" style="left:636px;top:24px;width:146px;height:441px;overflow:hidden">
  <div class="a" style="left:-636px;top:-24px;width:785px;height:528px">
  <div style="position:absolute;left:676.2px;top:24.50px;width:22.0px;height:132.46px;background:#0000ff"></div><div style="position:absolute;left:676.2px;top:156.96px;width:22.0px;height:60.93px;background:#ff1a00"></div><div style="position:absolute;left:676.2px;top:217.89px;width:22.0px;height:60.93px;background:#0000ff"></div><div style="position:absolute;left:676.2px;top:286.44px;width:22.0px;height:60.93px;background:#ff1a00"></div><div style="position:absolute;left:676.2px;top:347.36px;width:22.0px;height:117.64px;background:#0000ff"></div><div style="position:absolute;left:698.7px;top:27.49px;width:21.6px;height:60.93px;background:#0000ff"></div><div style="position:absolute;left:698.7px;top:156.96px;width:21.6px;height:60.93px;background:#ff1a00"></div><div style="position:absolute;left:698.7px;top:217.89px;width:21.6px;height:7.62px;background:#0000ff"></div><div style="position:absolute;left:698.7px;top:286.44px;width:21.6px;height:60.93px;background:#ff1a00"></div><div style="position:absolute;left:698.7px;top:347.36px;width:21.6px;height:60.93px;background:#0000ff"></div><div style="position:absolute;left:698.7px;top:415.91px;width:21.6px;height:49.09px;background:#0000ff"></div><div style="position:absolute;left:720.9px;top:35.11px;width:21.8px;height:53.31px;background:#0000ff"></div><div style="position:absolute;left:720.9px;top:156.96px;width:21.8px;height:60.93px;background:#0000ff"></div><div style="position:absolute;left:720.9px;top:286.44px;width:21.8px;height:60.93px;background:#0000ff"></div><div style="position:absolute;left:720.9px;top:415.91px;width:21.8px;height:49.09px;background:#0000ff"></div><div style="position:absolute;left:742.9px;top:164.58px;width:21.9px;height:53.31px;background:#0000ff"></div>
  <div class="a" style="left:698.2px;top:0;width:0.8px;height:528px;background:rgba(205,205,205,0.6)"></div>
  <div class="a" style="left:720.3px;top:0;width:0.8px;height:528px;background:rgba(205,205,205,0.6)"></div>
  <div class="a" style="left:742.4px;top:0;width:0.8px;height:528px;background:rgba(205,205,205,0.6)"></div>
  <div class="a" style="left:764.6px;top:0;width:1.4px;height:528px;background:#b0b0b0"></div>
  <div class="a" style="left:653px;top:172.30px;width:23.5px;height:7.5px;background:rgba(0,225,255,0.85)"></div>
  <div class="a" style="left:676.5px;top:172.30px;width:88.3px;height:7.5px;background:rgba(255,255,255,0.35)"></div>
  <div class="a" style="left:764.8px;top:172.30px;width:5px;height:7.5px;background:rgba(0,225,255,0.85)"></div>
  <div class="lab" style="top:19.18px">333</div><div class="tick" style="top:23px"></div><div class="lab" style="top:26.80px">334</div><div class="tick" style="top:31px"></div><div class="lab" style="top:34.42px">335</div><div class="tick" style="top:38px"></div><div class="lab" style="top:42.03px">336</div><div class="tick" style="top:46px"></div><div class="lab" style="top:49.65px">337</div><div class="tick" style="top:54px"></div><div class="lab" style="top:57.26px">338</div><div class="tick" style="top:61px"></div><div class="lab" style="top:64.88px">339</div><div class="tick" style="top:69px"></div><div class="lab" style="top:72.50px">340</div><div class="tick" style="top:76px"></div><div class="lab" style="top:80.11px">341</div><div class="tick" style="top:84px"></div><div class="lab" style="top:87.73px">342</div><div class="tick" style="top:92px"></div><div class="lab" style="top:95.34px">343</div><div class="tick" style="top:99px"></div><div class="lab" style="top:102.96px">344</div><div class="tick" style="top:107px"></div><div class="lab" style="top:110.58px">345</div><div class="tick" style="top:115px"></div><div class="lab" style="top:118.19px">346</div><div class="tick" style="top:122px"></div><div class="lab" style="top:125.81px">347</div><div class="tick" style="top:130px"></div><div class="lab" style="top:133.42px">348</div><div class="tick" style="top:137px"></div><div class="lab" style="top:141.04px">349</div><div class="tick" style="top:145px"></div><div class="lab" style="top:148.66px">350</div><div class="tick" style="top:153px"></div><div class="lab" style="top:156.27px">351</div><div class="tick" style="top:160px"></div><div class="lab" style="top:163.89px">352</div><div class="tick" style="top:168px"></div><div class="lab" style="top:171.50px">353</div><div class="tick" style="top:176px"></div><div class="lab" style="top:179.12px">354</div><div class="tick" style="top:183px"></div><div class="lab" style="top:186.74px">355</div><div class="tick" style="top:191px"></div><div class="lab" style="top:194.35px">356</div><div class="tick" style="top:198px"></div><div class="lab" style="top:201.97px">357</div><div class="tick" style="top:206px"></div><div class="lab" style="top:209.58px">358</div><div class="tick" style="top:214px"></div><div class="lab" style="top:217.20px">359</div><div class="tick" style="top:221px"></div><div class="lab" style="top:224.82px">360</div><div class="tick" style="top:229px"></div><div class="lab" style="top:232.43px">361</div><div class="tick" style="top:236px"></div><div class="lab" style="top:240.05px">362</div><div class="tick" style="top:244px"></div><div class="lab" style="top:247.66px">363</div><div class="tick" style="top:252px"></div><div class="lab" style="top:255.28px">364</div><div class="tick" style="top:259px"></div><div class="lab" style="top:262.90px">365</div><div class="tick" style="top:267px"></div><div class="lab" style="top:270.51px">366</div><div class="tick" style="top:275px"></div><div class="lab" style="top:278.13px">367</div><div class="tick" style="top:282px"></div><div class="lab" style="top:285.74px">368</div><div class="tick" style="top:290px"></div><div class="lab" style="top:293.36px">369</div><div class="tick" style="top:297px"></div><div class="lab" style="top:300.98px">370</div><div class="tick" style="top:305px"></div><div class="lab" style="top:308.59px">371</div><div class="tick" style="top:313px"></div><div class="lab" style="top:316.21px">372</div><div class="tick" style="top:320px"></div><div class="lab" style="top:323.82px">373</div><div class="tick" style="top:328px"></div><div class="lab" style="top:331.44px">374</div><div class="tick" style="top:335px"></div><div class="lab" style="top:339.06px">375</div><div class="tick" style="top:343px"></div><div class="lab" style="top:346.67px">376</div><div class="tick" style="top:351px"></div><div class="lab" style="top:354.29px">377</div><div class="tick" style="top:358px"></div><div class="lab" style="top:361.90px">378</div><div class="tick" style="top:366px"></div><div class="lab" style="top:369.52px">379</div><div class="tick" style="top:374px"></div><div class="lab" style="top:377.14px">380</div><div class="tick" style="top:381px"></div><div class="lab" style="top:384.75px">381</div><div class="tick" style="top:389px"></div><div class="lab" style="top:392.37px">382</div><div class="tick" style="top:396px"></div><div class="lab" style="top:399.98px">383</div><div class="tick" style="top:404px"></div><div class="lab" style="top:407.60px">384</div><div class="tick" style="top:412px"></div><div class="lab" style="top:415.22px">385</div><div class="tick" style="top:419px"></div><div class="lab" style="top:422.83px">386</div><div class="tick" style="top:427px"></div><div class="lab" style="top:430.45px">387</div><div class="tick" style="top:434px"></div><div class="lab" style="top:438.06px">388</div><div class="tick" style="top:442px"></div><div class="lab" style="top:445.68px">389</div><div class="tick" style="top:450px"></div><div class="lab" style="top:453.30px">390</div><div class="tick" style="top:457px"></div><div class="lab" style="top:460.91px">391</div><div class="tick" style="top:465px"></div>
  <div class="a" style="left:653.3px;top:0;width:1px;height:528px;background:#333"></div>
  </div>
</div>
<div class="a" style="left:636px;top:464.7px;width:145.5px;height:1px;background:#333"></div>
<div class="a" style="left:676px;top:465px;width:1px;height:10px;background:#333"></div>
<div class="a" style="left:698px;top:465px;width:1px;height:4.5px;background:#333"></div>
<div class="a" style="left:720px;top:465px;width:1px;height:4.5px;background:#333"></div>
<div class="a" style="left:742.5px;top:465px;width:1px;height:4.5px;background:#333"></div>
<div class="a" style="left:764.8px;top:465px;width:1px;height:4.5px;background:#333"></div>
<div class="t" style="left:685.5px;top:470px;font-size:5.5px;color:#333">1</div>
<div class="t" style="left:707.5px;top:470px;font-size:5.5px;color:#333">2</div>
<div class="t" style="left:729.5px;top:470px;font-size:5.5px;color:#333">3</div>
<div class="t" style="left:751.8px;top:470px;font-size:5.5px;color:#333">4</div>
<div class="a" style="left:643.8px;top:245px;white-space:nowrap;font-size:7.6px;line-height:7px;color:#000;filter:grayscale(1);-webkit-text-stroke:0.2px #000;transform:translate(-50%,-50%) rotate(90deg)">Milliseconds</div>
<!-- button panel -->
<div class="a" style="left:636px;top:483.5px;width:146px;height:40.5px;background:#f0f0f0"></div>
<div class="btn" style="left:641.6px;top:488.7px;width:30px;height:13.7px"><span>5 ms</span></div>
<div class="btn" style="left:676px;top:488.7px;width:30px;height:13.7px"><span>10 ms</span></div>
<div class="btn" style="left:711px;top:488.7px;width:30.2px;height:13.7px"><span>50 ms</span></div>
<div class="btn" style="left:745.6px;top:488.7px;width:30.3px;height:13.7px"><span>100 ms</span></div>
<div class="btn" style="left:641.6px;top:506.8px;width:134.3px;height:13.7px"><span>Reset Zoom</span></div>
</body></html>
